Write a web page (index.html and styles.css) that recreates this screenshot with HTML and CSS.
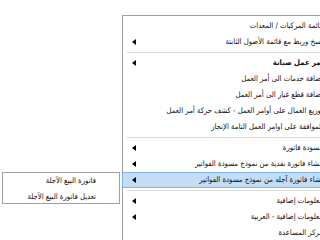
FILE: index.html
```html
<!DOCTYPE html>
<html lang="ar">
<head>
    <meta charset="UTF-8">
    <title>Context Menu</title>
    <link rel="stylesheet" href="styles.css">
</head>
<body>

    <div class="menu main-menu" dir="rtl">
        <div class="item"><span class="label">قائمة المركبات / المعدات</span></div>
        <div class="item sub"><span class="label">نسخ وربط مع قائمة الأصول الثابتة</span></div>
        <div class="sep"></div>
        <div class="item sub bold"><span class="label">أمر عمل صيانة</span></div>
        <div class="item"><span class="label">إضافة خدمات الى أمر العمل</span></div>
        <div class="item"><span class="label">إضافة قطع غيار الى أمر العمل</span></div>
        <div class="item"><span class="label">توزيع العمال على أوامر العمل - كشف حركة أمر العمل</span></div>
        <div class="item"><span class="label">الموافقة على اوامر العمل التامة الإنجاز</span></div>
        <div class="sep"></div>
        <div class="item sub"><span class="label">مسودة فاتورة</span></div>
        <div class="item sub"><span class="label">إنشاء فاتورة نقدية من نموذج مسودة الفواتير</span></div>
        <div class="item sub active"><span class="label">إنشاء فاتورة آجله من نموذج مسودة الفواتير</span></div>
        <div class="sep"></div>
        <div class="item sub"><span class="label">معلومات إضافية</span></div>
        <div class="item sub"><span class="label">معلومات إضافية - العربية</span></div>
        <div class="item"><span class="label">مركز المساعدة</span></div>
    </div>

    <div class="menu sub-menu" dir="rtl">
        <div class="item"><span class="label">فاتورة البيع الآجلة</span></div>
        <div class="item"><span class="label">تعديل فاتورة البيع الآجلة</span></div>
    </div>

</body>
</html>
```

FILE: styles.css
```css
body {
    margin: 0;
    padding: 0;
    background: #fff;
    font-family: "DejaVu Sans Condensed", "DejaVu Sans", sans-serif;
    font-size: 7.7px;
    color: #111;
    overflow: hidden;
    width: 320px;
    height: 240px;
    position: relative;
}
.menu {
    position: absolute;
    background: #fff;
    border: 1px solid #a0a0a0;
    padding: 0 2px;
    box-sizing: border-box;
}
.main-menu {
    left: 122px;
    top: 15px;
    width: 210px;
    padding-top: 2px;
}
.sub-menu {
    left: 2px;
    top: 172px;
    width: 118px;
    height: 32px;
}
.item {
    display: flex;
    align-items: center;
    height: 16px;
    padding: 0 6px 0 7px;
    white-space: nowrap;
    box-sizing: border-box;
}
.label {
    line-height: 16px;
}
.sub-menu .item {
    padding-right: 21px;
}
.bold {
    font-weight: bold;
}
.sub::after {
    content: "";
    margin-right: auto;
    border-top: 3.5px solid transparent;
    border-bottom: 3.5px solid transparent;
    border-right: 4px solid #000;
}
.active {
    background: #c4dcf4;
    border: 1px solid #7fb4ea;
    margin: 0 -3px;
    padding-left: 9px;
}
.sep {
    height: 1px;
    background: #d7d7d7;
    margin: 2px 0 2px 2px;
}
```
